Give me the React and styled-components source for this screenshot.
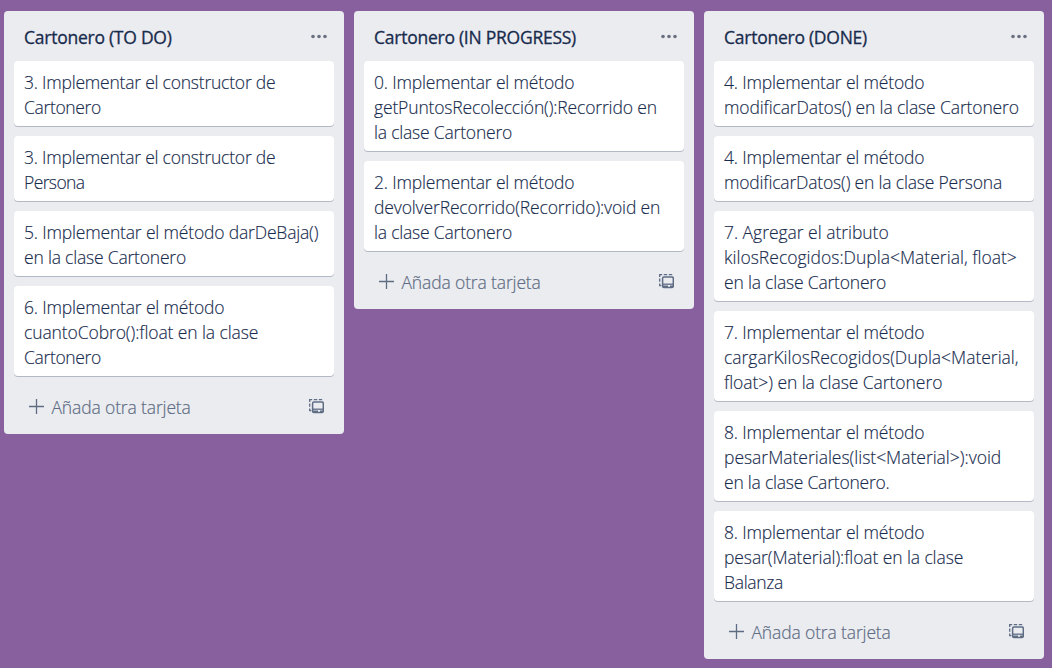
import React from "react";
import styled, { createGlobalStyle } from "styled-components";

const GlobalStyle = createGlobalStyle`
  * { box-sizing: border-box; }
  html, body { margin: 0; height: 100%; }
  body {
    background: #89609e;
    color: #172b4d;
    font-family: "Segoe UI", "Open Sans", "Noto Sans", sans-serif;
    font-size: 17.5px;
    line-height: 25px;
    overflow: hidden;
  }
`;

const Board = styled.main`
  display: flex;
  align-items: flex-start;
  gap: 10px;
  height: 668px;
  padding: 11px 8px 0 4px;
`;

const List = styled.section`
  flex: 0 0 340px;
  background: #ebecf0;
  border-radius: 4px;
  padding: 0 10px;
`;

const ListHeader = styled.header`
  display: flex;
  justify-content: space-between;
  height: 50px;
  padding: 14px 7px 0 10px;
`;

const ListTitle = styled.h2`
  margin: 0;
  font-size: 17.5px;
  font-weight: 500;
  line-height: 25px;
  letter-spacing: ${(p) => p.$spacing}px;
  -webkit-text-stroke: 0.3px currentColor;
  white-space: nowrap;
`;

const Cards = styled.div`
  display: flex;
  flex-direction: column;
  gap: 10px;
`;

const Card = styled.article`
  background: #fff;
  border-radius: 4px;
  box-shadow: 0 1px 0 rgba(9, 30, 66, 0.25);
  padding: 9px 10px 6px;
`;

const CardLine = styled.div`
  font-weight: 300;
  letter-spacing: ${(p) => p.$spacing}px;
  -webkit-text-stroke: 0.15px currentColor;
  white-space: nowrap;
`;

const ListFooter = styled.footer`
  display: flex;
  align-items: flex-start;
  height: 58px;
  padding: 19px 10px 0 15px;
  color: #5e6c84;
`;

const AddLabel = styled.span`
  flex: 1;
  margin-left: 7.5px;
  font-weight: 300;
  letter-spacing: -0.14px;
  -webkit-text-stroke: 0.2px currentColor;
  white-space: nowrap;
`;

const Glyph = styled.svg`
  display: block;
  flex: none;
  margin-top: ${(p) => p.$top}px;
  color: ${(p) => p.$color || "#5e6c84"};
`;

const MoreIcon = () => (
  <Glyph width="16" height="5" viewBox="0 0 16 5" fill="currentColor" $color="#6b7080" $top={9}>
    <circle cx="2" cy="2.5" r="1.8" />
    <circle cx="8" cy="2.5" r="1.8" />
    <circle cx="14" cy="2.5" r="1.8" />
  </Glyph>
);

const PlusIcon = () => (
  <Glyph width="15" height="15" viewBox="0 0 15 15" $top={4}>
    <path d="M7.5 0v15M0 7.5h15" stroke="currentColor" strokeWidth="1.3" />
  </Glyph>
);

const TemplateIcon = () => (
  <Glyph width="15" height="15" viewBox="0 0 15 15" fill="none" stroke="currentColor" $top={4}>
    <path d="M.7 3V.7h2.5M4.8.7h3.4M9.8.7h3.4M.7 4.6v3.2M.7 9.4v2.3h1.6" strokeWidth="1.3" />
    <rect x="3.6" y="3.1" width="10.7" height="10.4" rx="1.3" strokeWidth="1.5" />
    <path d="M3.5 10.2h10.7" strokeWidth="1.3" />
    <path d="M4 12.2h5M11 12.2h3" strokeWidth="1.6" />
  </Glyph>
);

const lists = [
  {
    title: "Cartonero (TO DO)",
    spacing: -0.25,
    cards: [
      [["3. Implementar el constructor de", -0.22], ["Cartonero", -0.35]],
      [["3. Implementar el constructor de", -0.22], ["Persona", -0.6]],
      [["5. Implementar el método darDeBaja()", -0.17], ["en la clase Cartonero", -0.2]],
      [["6. Implementar el método", -0.17], ["cuantoCobro():float en la clase", -0.1], ["Cartonero", -0.35]],
    ],
  },
  {
    title: "Cartonero (IN PROGRESS)",
    spacing: -0.25,
    cards: [
      [["0. Implementar el método", -0.17], ["getPuntosRecolección():Recorrido en", -0.15], ["la clase Cartonero", -0.2]],
      [["2. Implementar el método", -0.17], ["devolverRecorrido(Recorrido):void en", -0.14], ["la clase Cartonero", -0.2]],
    ],
  },
  {
    title: "Cartonero (DONE)",
    spacing: -0.25,
    cards: [
      [["4. Implementar el método", -0.17], ["modificarDatos() en la clase Cartonero", -0.13]],
      [["4. Implementar el método", -0.17], ["modificarDatos() en la clase Persona", -0.18]],
      [["7. Agregar el atributo", -0.03], ["kilosRecogidos:Dupla<Material, float>", 0.01], ["en la clase Cartonero", -0.2]],
      [["7. Implementar el método", -0.17], ["cargarKilosRecogidos(Dupla<Material,", -0.02], ["float>) en la clase Cartonero", -0.06]],
      [["8. Implementar el método", -0.17], ["pesarMateriales(list<Material>):void", -0.02], ["en la clase Cartonero.", -0.22]],
      [["8. Implementar el método", -0.17], ["pesar(Material):float en la clase", -0.1], ["Balanza", -0.3]],
    ],
  },
];

export default function App() {
  return (
    <>
      <GlobalStyle />
      <Board>
        {lists.map((list) => (
          <List key={list.title}>
            <ListHeader>
              <ListTitle $spacing={list.spacing}>{list.title}</ListTitle>
              <MoreIcon />
            </ListHeader>
            <Cards>
              {list.cards.map((lines, i) => (
                <Card key={i}>
                  {lines.map(([text, spacing]) => (
                    <CardLine key={text} $spacing={spacing}>{text}</CardLine>
                  ))}
                </Card>
              ))}
            </Cards>
            <ListFooter>
              <PlusIcon />
              <AddLabel>Añada otra tarjeta</AddLabel>
              <TemplateIcon />
            </ListFooter>
          </List>
        ))}
      </Board>
    </>
  );
}
